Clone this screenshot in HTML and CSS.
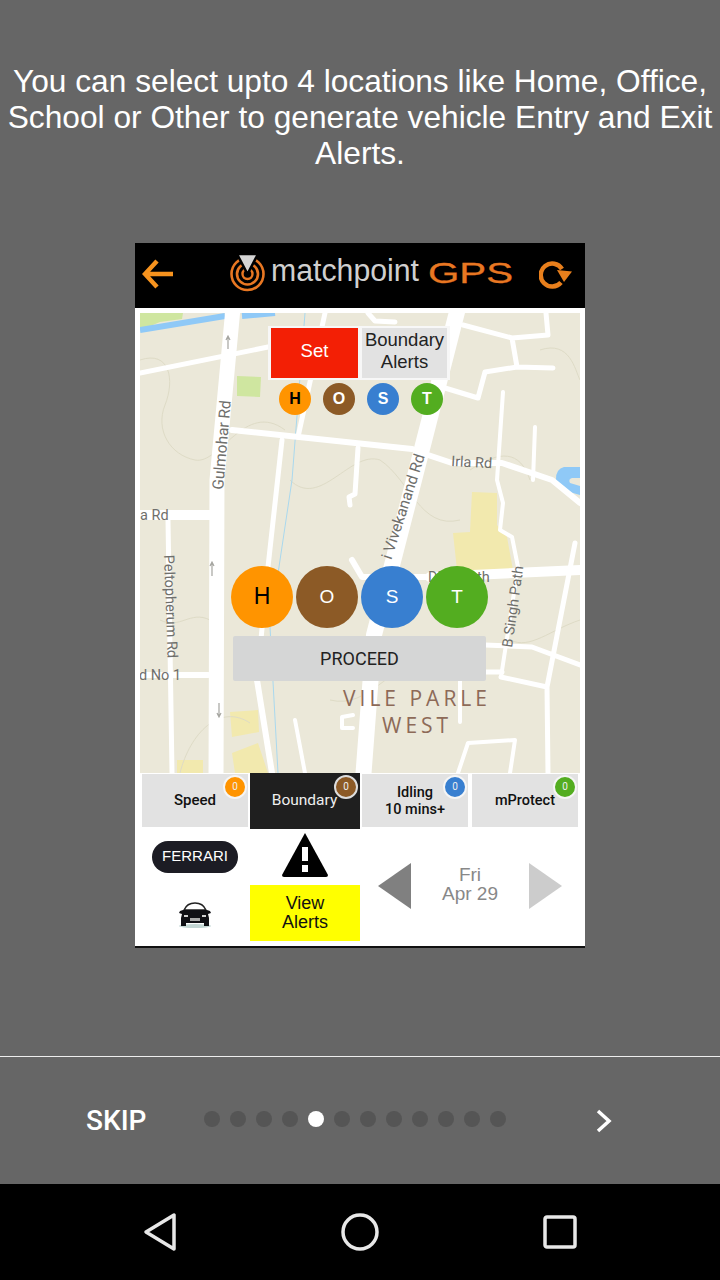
FILE: index.html
```html
<!DOCTYPE html>
<html lang="en">
<head>
    <meta charset="UTF-8">
    <meta name="viewport" content="width=device-width, initial-scale=1.0">
    <title>Matchpoint GPS tour</title>
    <link rel="stylesheet" href="styles.css">
</head>
<body>
    <main class="tour">
        <p class="intro">You can select upto 4 locations like Home, Office, School or Other to generate vehicle Entry and Exit Alerts.</p>

        <div class="shot">
            <header class="app-bar">
                <svg class="back" width="32" height="32" viewBox="0 0 32 32"><path d="M31 16H4M15 3L3 16l12 13" fill="none" stroke="#f7931e" stroke-width="4.5"/></svg>
                <svg class="logo" width="290" height="50" viewBox="229 248 290 50">
                    <circle cx="247.5" cy="273" r="16" fill="none" stroke="#e87722" stroke-width="2.6"/>
                    <circle cx="247.5" cy="273" r="10.5" fill="none" stroke="#e87722" stroke-width="2.6"/>
                    <circle cx="247.5" cy="273" r="5" fill="none" stroke="#e87722" stroke-width="2.4"/>
                    <path d="M237 253h21l-10.500 20z" fill="#d4d4d4" stroke="#000" stroke-width="2.500"/>
                    <text class="logo-name" x="271" y="280" textLength="148" lengthAdjust="spacingAndGlyphs">matchpoint</text>
                    <text class="logo-gps" x="428" y="282" textLength="85" lengthAdjust="spacingAndGlyphs">GPS</text>
                </svg>
                <svg class="refresh" width="34" height="32" viewBox="0 0 34 32"><path d="M23 11A11.500 11.500 0 1 0 22 24.500" fill="none" stroke="#e87f1c" stroke-width="4.500"/><path d="M18 12l15 1.500L25 24z" fill="#e87f1c"/></svg>
            </header>

            <section class="map">
                <svg class="map-art" width="440" height="460" viewBox="140 313 440 460">
                    <rect x="140" y="313" width="440" height="460" fill="#ebe8d9"/>
                    <path d="M140 313h43l-1 6-22 3-12 5-8 1z" fill="#cfe6a0"/>
                    <path d="M237 376l24 1-1 20-23-1z" fill="#cfe6a0"/>
                    <path d="M472 492l25 1v32l10 12 6 33h-56l-4-37 17-1z" fill="#f2e9ae"/>
                    <path d="M230 712l28-2 1 22-27 5zM232 753l26-10 10 30h-33zM177 760h26v13h-26z" fill="#f2e9ae"/>
                    <path d="M140 360c30-10 35 20 25 45s5 50 30 55 50-60 90-30M290 480c30 30 60-30 90-20 30 20 40 70 80 60M330 700c40 10 60-40 90-30M180 773c10-40 40-70 70-50M470 470c30-20 50-20 60 10M540 350c30-10 35 20 40 30M160 620c20 10 30-10 50 0M510 640c20 10 40-10 70-20" fill="none" stroke="#dedbc6" stroke-width="1"/>
                    <path d="M305 313l-13 167-22 147 8 146" fill="none" stroke="#a9d8ee" stroke-width="1"/>
                    <path d="M140 330l85-14M242 316l33-3" fill="none" stroke="#8fc9f7" stroke-width="6"/>
                    <path d="M580 467h-16q-8 2-8 12 0 10 10 12l14 4z" fill="#8fc9f7"/>
                    <path d="M580 478h-8q-4 1-2 5l10 3z" fill="#ebe8d9"/>
                    <g fill="none" stroke="#fff" stroke-linejoin="round" stroke-linecap="round">
                        <path d="M233 308l-16 172-1 300" stroke-width="15"/>
                        <path d="M458 308l-44 172-40 155-11 145" stroke-width="16"/>
                        <path d="M140 373l128-26 30-5" stroke-width="5"/>
                        <path d="M232 430l180 19M428 455l24 8h50l50 17 28 23" stroke-width="6"/>
                        <path d="M325 313l-27 124M282 440l-14 127-11 113" stroke-width="5"/>
                        <path d="M257 680l15 93" stroke-width="6"/>
                        <path d="M358 448l-3 46-6 3 1 8" stroke-width="5"/>
                        <path d="M368 313l7 8 20 1M463 325l49 13 36-3-2-22M512 338l5 29-32 5-7 26-33-10M517 367l36 1" stroke-width="5"/>
                        <path d="M503 392l-6 88 6 23-3 27 12 7 6 30-17 110" stroke-width="4"/>
                        <path d="M535 427l-2 53" stroke-width="4"/>
                        <path d="M352 560l10 17h68" stroke-width="6"/>
                        <path d="M430 577l150-7" stroke-width="10"/>
                        <path d="M575 543l-28 144 1 86M485 645l47 2 48 18M485 672h17M501 677l46 10" stroke-width="5"/>
                        <path d="M168 520l4 253" stroke-width="5"/>
                        <path d="M140 515h70" stroke-width="10"/>
                        <path d="M140 675h68" stroke-width="6"/>
                        <path d="M295 720l10 53M460 680v42M353 715l-11 2v11h11M458 773l10-30 47-3-5 33" stroke-width="4"/>
                    </g>
                    <path d="M228 349v-12m-2 3l2-4 2 4M212 576v-13m-2 3l2-4 2 4M219 703v13m-2-3l2 4 2-4" fill="none" stroke="#a5a5a0" stroke-width="1.200"/>
                    <g class="map-label">
                        <text class="label-lg" transform="translate(223 490) rotate(-85)">Gulmohar Rd</text>
                        <text x="451" y="466" transform="rotate(3 451 466)">Irla Rd</text>
                        <text x="140" y="520">a Rd</text>
                        <text transform="translate(164 555) rotate(88)">Peltopherum Rd</text>
                        <text x="139" y="680">d No 1</text>
                        <text transform="translate(512 648) rotate(-82)">B Singh Path</text>
                        <text class="label-lg label-end" transform="translate(425 456) rotate(-72)">i Vivekanand Rd</text>
                        <text x="428" y="582">Dixit Path</text>
                    </g>
                    <text class="map-area" x="343" y="706">VILE PARLE</text>
                    <text class="map-area" x="382" y="733">WEST</text>
                </svg>

                <div class="mode-switch">
                    <div class="mode-set">Set</div>
                    <div class="mode-alerts">Boundary<br>Alerts</div>
                </div>
                <div class="mini-dots">
                    <span class="dot dot-home">H</span>
                    <span class="dot dot-office">O</span>
                    <span class="dot dot-school">S</span>
                    <span class="dot dot-other">T</span>
                </div>
                <div class="big-dots">
                    <span class="dot dot-home">H</span>
                    <span class="dot dot-office">O</span>
                    <span class="dot dot-school">S</span>
                    <span class="dot dot-other">T</span>
                </div>
                <div class="proceed">PROCEED</div>
            </section>

            <nav class="tabs">
                <div class="tab tab-first">Speed<span class="badge dot-home">0</span></div>
                <div class="tab tab-active">Boundary<span class="badge dot-office">0</span></div>
                <div class="tab">Idling<br>10 mins+<span class="badge dot-school">0</span></div>
                <div class="tab tab-last">mProtect<span class="badge dot-other">0</span></div>
            </nav>

            <section class="panel">
                <div class="vehicle">
                    <div class="vehicle-name">FERRARI</div>
                    <svg width="36" height="30" viewBox="0 0 36 30">
                        <ellipse cx="18" cy="27" rx="16" ry="2" fill="#c3d6d4"/>
                        <path d="M7 11Q10 4 18 4t11 7z" fill="#fff" stroke="#222" stroke-width="1.400"/>
                        <path d="M6 11h24l3 1 1 2-3 1 1 4v8h-5v-3H9v3H4v-8l1-4-3-1 1-2z" fill="#0f0f14"/>
                        <path d="M7 16h4v2H7zM25 16h4v2h-4z" fill="#cfcfcf"/>
                        <path d="M13 19h10v3H13z" fill="#a8a8a8"/>
                    </svg>
                </div>
                <div class="alerts">
                    <svg class="warning" width="48" height="46" viewBox="0 0 48 46">
                        <path d="M24 1L47 43q0 2-2 2H3q-2 0-2-2z" fill="#000"/>
                        <path d="M21 15h6v14h-6zM21 33h6v7h-6z" fill="#fff"/>
                    </svg>
                    <div class="view-alerts">View<br>Alerts</div>
                </div>
                <div class="date-pick">
                    <span class="arrow arrow-prev"></span>
                    <div class="date">Fri<br>Apr 29</div>
                    <span class="arrow arrow-next"></span>
                </div>
            </section>
        </div>
    </main>

    <footer class="pager">
        <span class="skip">SKIP</span>
        <div class="pager-dots">
            <i></i><i></i><i></i><i></i><i class="on"></i><i></i><i></i><i></i><i></i><i></i><i></i><i></i>
        </div>
        <svg class="next" width="16" height="24" viewBox="0 0 16 24"><path d="M2 2l11 10L2 22" fill="none" stroke="#fff" stroke-width="3.500"/></svg>
    </footer>

    <div class="sys-nav">
        <svg width="34" height="40" viewBox="0 0 34 40"><path d="M31 3v34L3 20z" fill="none" stroke="#e8e8e8" stroke-width="3.500" stroke-linejoin="round"/></svg>
        <svg width="38" height="38" viewBox="0 0 38 38"><circle cx="19" cy="19" r="17" fill="none" stroke="#e8e8e8" stroke-width="3.500"/></svg>
        <svg width="34" height="34" viewBox="0 0 34 34"><rect x="2" y="2" width="30" height="30" rx="2" fill="none" stroke="#e8e8e8" stroke-width="3.500"/></svg>
    </div>
</body>
</html>
```

FILE: styles.css
```css
* {
    box-sizing: border-box;
}

body {
    display: flex;
    flex-direction: column;
    width: 720px;
    height: 1280px;
    margin: 0;
    background-color: #666;
    font-family: "Liberation Sans", Arial, sans-serif;
    overflow: hidden;
}

.tour {
    height: 1057px;
    border-bottom: 1px solid #eee;
}

.intro {
    height: 243px;
    margin: 0;
    padding: 63px 0 0;
    color: #fff;
    font-size: 31.7px;
    line-height: 36px;
    text-align: center;
}

/* screenshot of the app */
.shot {
    width: 450px;
    height: 705px;
    margin: 0 auto;
    background-color: #fff;
    border-bottom: 2px solid #111;
}

.app-bar {
    display: flex;
    align-items: center;
    height: 65px;
    padding-left: 7px;
    padding-bottom: 4px;
    background-color: #000;
}

.logo {
    margin-left: 55px;
}

.refresh {
    margin-left: 20px;
}

.logo-name {
    fill: #cfcfcf;
    font-size: 31px;
}

.logo-gps {
    fill: #e87722;
    stroke: #e87722;
    stroke-width: 0.3px;
    font-size: 30px;
}

.map {
    position: relative;
    height: 465px;
    padding: 5px 5px 0;
}

.map-art {
    display: block;
}

.map-label {
    fill: #6f6f6c;
    font-family: Roboto, sans-serif;
    font-size: 14.5px;
}

.label-lg {
    font-size: 15.5px;
}

.label-end {
    text-anchor: end;
}

.map-area {
    fill: #8d6a58;
    font-family: "Open Sans", sans-serif;
    font-size: 21px;
    letter-spacing: 4px;
}

.mode-switch {
    position: absolute;
    top: 18px;
    left: 133px;
    display: flex;
    gap: 4px;
    width: 182px;
    height: 54px;
    padding: 2px 3px;
    background-color: #f7f7f7;
    font-size: 18.5px;
    text-align: center;
}

.mode-set {
    width: 87px;
    color: #fff;
    background-color: #f31f05;
    line-height: 46px;
}

.mode-alerts {
    flex: 1;
    color: #222;
    background-color: #e2e2e2;
    line-height: 22px;
    padding-top: 1px;
}

.mini-dots,
.big-dots {
    position: absolute;
    display: flex;
}

.mini-dots {
    top: 75px;
    left: 144px;
    gap: 12px;
}

.big-dots {
    top: 258px;
    left: 96px;
    gap: 3px;
}

.dot {
    display: flex;
    align-items: center;
    justify-content: center;
    border-radius: 50%;
    color: #fff;
}

.mini-dots .dot {
    width: 32px;
    height: 32px;
    font-size: 16px;
    font-weight: bold;
}

.big-dots .dot {
    width: 62px;
    height: 62px;
    font-size: 19px;
}

.big-dots .dot-home {
    padding-bottom: 2px;
    font-size: 23px;
}

.dot-home {
    background-color: #ff9400;
    color: #000;
}

.dot-office {
    background-color: #8c5a26;
}

.dot-school {
    background-color: #387fd0;
}

.dot-other {
    background-color: #53ad20;
}

.proceed {
    position: absolute;
    top: 328px;
    left: 98px;
    width: 253px;
    height: 45px;
    border-radius: 2px;
    background-color: #d5d6d6;
    color: #222;
    font-family: Roboto, sans-serif;
    font-size: 18px;
    line-height: 45px;
    text-align: center;
}

.tabs {
    display: flex;
    align-items: flex-start;
    height: 56px;
    padding-left: 7px;
    gap: 2px;
}

.tab {
    position: relative;
    width: 106px;
    height: 53px;
    margin-top: 1px;
    padding-top: 10px;
    background-color: #e2e2e2;
    color: #111;
    font-family: Roboto, sans-serif;
    font-size: 14.5px;
    font-weight: 500;
    line-height: 17px;
    text-align: center;
}

.tab-first {
    padding-top: 18px;
    font-size: 15px;
}

.tab-active {
    width: 110px;
    height: 56px;
    margin-top: 0;
    padding-top: 19px;
    padding-right: 1px;
    background-color: #1f1f1f;
    color: #eee;
    font-size: 15.5px;
    font-weight: 400;
}

.tab-last {
    margin-left: 2px;
    padding-top: 18px;
}

.badge {
    position: absolute;
    top: 1px;
    right: 1px;
    width: 24px;
    height: 24px;
    padding: 0;
    border: 2.5px solid #f5f5f5;
    border-radius: 50%;
    color: #eee;
    font-size: 10px;
    font-weight: 400;
    line-height: 19px;
}

.tab-active .badge {
    top: 2px;
    right: 2px;
    border-color: #ddd;
}

.panel {
    display: flex;
    height: 117px;
    padding-left: 5px;
}

.vehicle {
    display: flex;
    flex-direction: column;
    align-items: center;
    width: 110px;
    padding-top: 12px;
}

.vehicle-name {
    width: 86px;
    height: 32px;
    border-radius: 16px;
    background-color: #1c1c24;
    color: #fff;
    font-size: 15px;
    line-height: 30px;
    text-align: center;
}

.vehicle svg {
    margin-top: 26px;
}

.alerts {
    display: flex;
    flex-direction: column;
    align-items: center;
    width: 110px;
    padding-top: 3px;
}

.view-alerts {
    width: 110px;
    height: 56px;
    margin-top: 7px;
    padding-top: 9px;
    background-color: #ff0;
    color: #111;
    font-size: 18px;
    line-height: 19px;
    text-align: center;
}

.date-pick {
    display: flex;
    align-items: center;
    height: 90px;
    margin-top: 12px;
    padding-left: 18px;
}

.date {
    width: 118px;
    margin-bottom: 4px;
    color: #888;
    font-size: 19px;
    line-height: 19px;
    text-align: center;
}

.arrow {
    width: 0;
    height: 0;
    border-top: 23px solid transparent;
    border-bottom: 23px solid transparent;
}

.arrow-prev {
    border-right: 33px solid #808080;
}

.arrow-next {
    border-left: 33px solid #ccc;
}

.pager {
    display: flex;
    align-items: center;
    height: 127px;
    padding-left: 86px;
}

.skip {
    width: 118px;
    color: #fff;
    font-family: Roboto, sans-serif;
    font-size: 28px;
    font-weight: 500;
}

.pager-dots {
    display: flex;
    gap: 10px;
    margin-top: -4px;
}

.pager-dots i {
    width: 16px;
    height: 16px;
    border-radius: 50%;
    background-color: #555;
}

.pager-dots i.on {
    background-color: #fff;
}

.next {
    margin-left: 90px;
}

.sys-nav {
    display: flex;
    align-items: center;
    height: 96px;
    padding-left: 143px;
    gap: 164px;
    background-color: #000;
}
```
